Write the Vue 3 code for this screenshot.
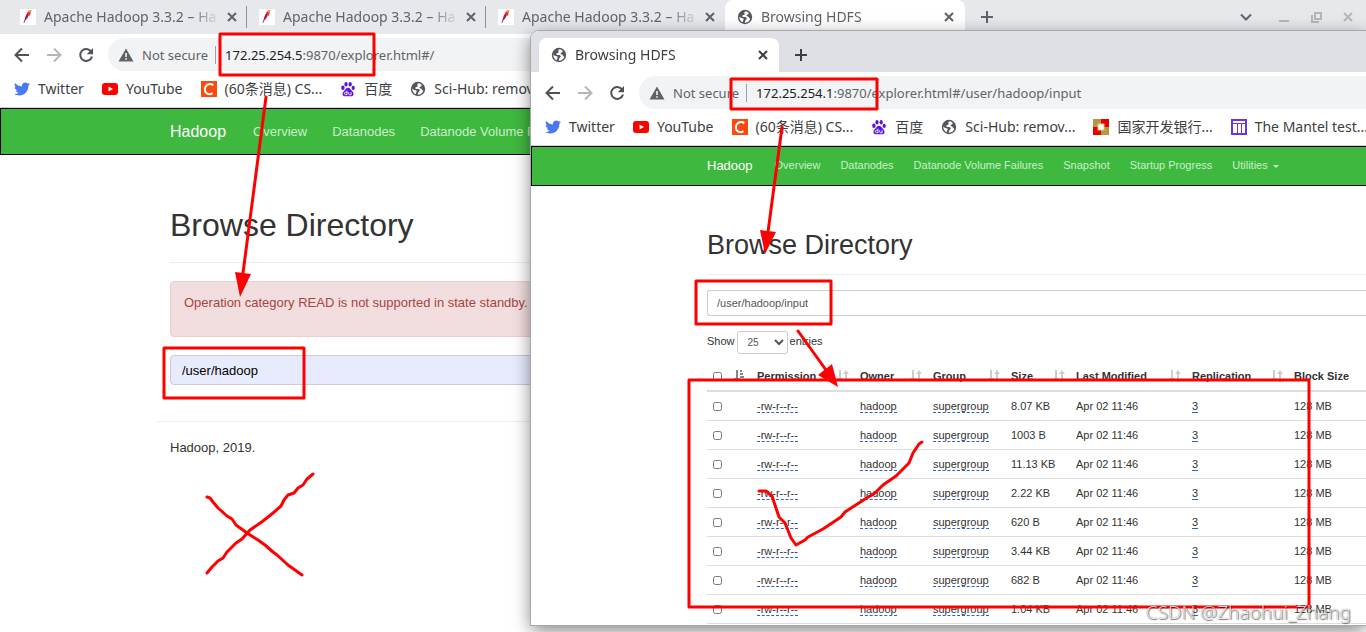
<template>
  <div class="desktop">
    <svg class="symbols" aria-hidden="true">
      <symbol id="feather" viewBox="0 0 16 16">
        <rect width="16" height="16" fill="#fff" />
        <path d="M4.2 13.6 4.8 10.4C5 8 6 5.500 7.600 3.400L9.300 4.500C8.600 7.500 7.200 9.700 5.400 11.200Z" fill="#b5124f" />
        <path d="M7 4.300C8 2.700 9.500 1.300 11.200 1.100 11.200 3 10.600 5 9.300 7.200Z" fill="#e2372b" />
        <path d="M8.700 2.500C9.500 1.600 10.400 1 11.300 1c0 1.100-.3 2.300-.8 3.400Z" fill="#f79a23" />
        <path d="M5 10.600 3.900 14" stroke="#6d3a8c" stroke-width=".8" />
      </symbol>
      <symbol id="globe" viewBox="0 0 16 16">
        <circle cx="8" cy="8" r="7.200" fill="#54585d" />
        <path d="M9.200 2.300c-1.800.2-2.100 1.200-1.700 2.200.4.900-.4 1.600-1.500 1.700-.9.100-1 .7-.6 1.300.5.600 1.800.3 2.900.4 1.300.1 1.500 1.200 1.300 2-.2.800-1.100.9-1.400 1.700-.2.700-.2 1.600-.6 2.100 2.700.1 5-1.500 5.700-4-.9-.1-1.200-.9-1.800-1.700-.5-.7-1.700-.5-1.900-1.200-.2-.8.9-1.100 1.600-1.500.5-.3.500-1.100.1-1.900Z" fill="#fff" />
        <path d="M2.300 7.500c.9.900 2.100 1.600 3.300 1.700 1.100.2 1.200.9.900 1.700-.3.700-.9 1-.7 2.400-2.200-.9-3.600-3.200-3.500-5.800Z" fill="#fff" />
      </symbol>
      <symbol id="twitter" viewBox="0 0 24 24">
        <path fill="#4a78f0" d="M23.953 4.570a10 10 0 01-2.825.775 4.958 4.958 0 002.163-2.723c-.951.555-2.005.959-3.127 1.184a4.920 4.920 0 00-8.384 4.482C7.690 8.095 4.067 6.130 1.640 3.162a4.822 4.822 0 00-.666 2.475c0 1.710.870 3.213 2.188 4.096a4.904 4.904 0 01-2.228-.616v.060a4.923 4.923 0 003.946 4.827 4.996 4.996 0 01-2.212.085 4.936 4.936 0 004.604 3.417 9.867 9.867 0 01-6.102 2.105c-.390 0-.779-.023-1.170-.067a13.995 13.995 0 007.557 2.209c9.053 0 13.998-7.496 13.998-13.985 0-.210 0-.420-.015-.630A9.935 9.935 0 0024 4.590z" />
      </symbol>
      <symbol id="youtube" viewBox="0 0 16 16">
        <rect y="2" width="16" height="12" rx="3" fill="#f00" />
        <path d="M6.500 5.500 11 8l-4.500 2.500Z" fill="#fff" />
      </symbol>
      <symbol id="csdn" viewBox="0 0 16 16">
        <rect width="16" height="16" fill="#fc4a0f" />
        <path d="M12.300 4.200C10.500 2.700 7.600 2.700 5.700 4.300 3.500 6.200 3.300 10 5.200 11.900c1.600 1.600 4.300 1.600 6.300.3" fill="none" stroke="#fff" stroke-width="2" />
      </symbol>
      <symbol id="baidu" viewBox="0 0 16 16">
        <g fill="#5a14dc">
          <ellipse cx="2.900" cy="6.700" rx="1.700" ry="2.200" />
          <ellipse cx="6" cy="3.200" rx="1.600" ry="2.200" />
          <ellipse cx="10.200" cy="3.200" rx="1.600" ry="2.200" />
          <ellipse cx="13.200" cy="6.900" rx="1.600" ry="2.100" />
          <path d="M8 6.800c1.700 0 2.500 1.800 4 3.200 1.500 1.300 1.800 2.500 1.300 3.900-.7 1.900-3 1.300-5.300 1.300s-4.500.6-5.300-1.200c-.6-1.500-.1-2.700 1.400-4C5.500 8.600 6.300 6.800 8 6.800Z" />
        </g>
        <path d="M7 9.700v4H5.600c-1.700 0-1.700-2.500 0-2.500H7M8.700 11.200v1.600c0 .7.300 1 .9 1h1.500v-2.600" fill="none" stroke="#fff" stroke-width=".9" />
      </symbol>
      <symbol id="bank" viewBox="0 0 16 16">
        <path d="M0 0h8v8H0ZM8 8h8v8H8Z" fill="#b8963c" />
        <path d="M8 0h8v8H8ZM0 8h8v8H0Z" fill="#e60000" />
        <rect x="5" y="5" width="6" height="6" fill="#fff" stroke="#d8c9a0" />
      </symbol>
      <symbol id="mantel" viewBox="0 0 16 16">
        <path d="M1 4.500h14M6.500 4.500V15M10.500 4.500V15" fill="none" stroke="#6633ee" />
        <path d="M1 1h14v14H1Z" fill="none" stroke="#6633ee" stroke-width="2" />
      </symbol>
      <symbol id="close" viewBox="0 0 16 16">
        <path d="m4 4 8 8M12 4l-8 8" fill="none" stroke="currentColor" stroke-width="2" />
      </symbol>
      <symbol id="plus" viewBox="0 0 16 16">
        <path d="M8 2v12M2 8h12" fill="none" stroke="currentColor" stroke-width="2" />
      </symbol>
      <symbol id="chevron" viewBox="0 0 16 16">
        <path d="m3 5.500 5 5 5-5" fill="none" stroke="currentColor" stroke-width="2" />
      </symbol>
      <symbol id="minimize" viewBox="0 0 16 16">
        <path d="M3 12h10" stroke="currentColor" stroke-width="2" />
      </symbol>
      <symbol id="restore" viewBox="0 0 16 16">
        <path d="M7 4h6v6H7ZM4 6v7h7" fill="none" stroke="currentColor" stroke-width="2" />
      </symbol>
      <symbol id="back" viewBox="0 0 16 16">
        <path d="M15 8H2M8 1.500 1.500 8 8 14.500" fill="none" stroke="currentColor" stroke-width="2" />
      </symbol>
      <symbol id="forward" viewBox="0 0 16 16">
        <path d="M1 8h13M8 1.500 14.500 8 8 14.500" fill="none" stroke="currentColor" stroke-width="2" />
      </symbol>
      <symbol id="reload" viewBox="0 0 16 16">
        <path d="M13.200 4.600A6 6 0 1 0 14 9.500" fill="none" stroke="currentColor" stroke-width="2" />
        <path d="M15 1v6.300H8.700Z" fill="currentColor" />
      </symbol>
      <symbol id="warning" viewBox="0 0 16 16">
        <path d="M8 1.500 15.500 14.500H.5Z" fill="currentColor" />
        <path d="M8 6v4M8 11.200v1.600" stroke="#fff" stroke-width="1.500" />
      </symbol>
      <symbol id="sort" viewBox="0 0 12 12">
        <path d="M3 0v10M9 12V2" fill="none" stroke="currentColor" stroke-width="2" />
        <path d="M0 8h6l-3 4ZM6 4h6L9 0Z" fill="currentColor" />
      </symbol>
      <symbol id="sort-asc" viewBox="0 0 12 12">
        <path d="M3 0v10" stroke="currentColor" stroke-width="2" />
        <path d="M0 8h6l-3 4Z" fill="currentColor" />
        <path d="M6 1h2M6 4h3M6 7h4M6 10h6" stroke="currentColor" stroke-width="2" />
      </symbol>
    </svg>

    <section v-for="win in windows" :key="win.id" :class="['window', win.id]">
      <div class="tab-strip">
        <div v-for="(tab, index) in win.tabs" :key="index" :class="['tab', { active: tab.active }]">
          <svg class="icon"><use :href="'#' + tab.icon" /></svg>
          <span class="tab-title">{{ tab.title }}</span>
          <button class="icon-button" aria-label="Close tab"><svg class="icon"><use href="#close" /></svg></button>
        </div>
        <button class="icon-button new-tab" aria-label="New tab"><svg class="icon"><use href="#plus" /></svg></button>
        <div v-if="win.controls" class="controls">
          <button v-for="name in win.controls" :key="name" :class="['icon-button', name]" :aria-label="name">
            <svg class="icon"><use :href="'#' + name" /></svg>
          </button>
        </div>
      </div>

      <div class="toolbar">
        <button class="icon-button" aria-label="Back"><svg class="icon"><use href="#back" /></svg></button>
        <button class="icon-button" aria-label="Forward" disabled><svg class="icon"><use href="#forward" /></svg></button>
        <button class="icon-button" aria-label="Reload"><svg class="icon"><use href="#reload" /></svg></button>
        <div class="address">
          <svg class="icon"><use href="#warning" /></svg>
          <span class="security">Not secure</span>
          <span class="url"><b>{{ win.host }}</b>{{ win.path }}</span>
        </div>
      </div>

      <nav class="bookmarks">
        <a v-for="mark in bookmarks" :key="mark.title" href="#" class="bookmark">
          <svg class="icon"><use :href="'#' + mark.icon" /></svg>
          <span>{{ mark.title }}</span>
        </a>
      </nav>

      <nav class="navbar">
        <a href="#" class="brand">Hadoop</a>
        <a v-for="item in navItems" :key="item" href="#" class="nav-link">{{ item }}</a>
        <a href="#" class="nav-link">Utilities <span class="caret"></span></a>
      </nav>

      <main v-if="win.id === 'standby'" class="page">
        <h1>Browse Directory</h1>
        <div class="alert">Operation category READ is not supported in state standby. Visit https://s.apache.org/sbnn-error</div>
        <input v-model="standbyPath" class="directory" type="text" aria-label="Directory" />
        <footer>Hadoop, 2019.</footer>
      </main>

      <main v-else class="page">
        <h1>Browse Directory</h1>
        <input v-model="activePath" class="directory" type="text" aria-label="Directory" />
        <label class="entries">
          Show
          <select v-model="pageSize">
            <option>25</option>
            <option>50</option>
            <option>100</option>
          </select>
          entries
        </label>
        <table>
          <thead>
            <tr>
              <th class="col-check">
                <div class="head">
                  <input type="checkbox" aria-label="Select all" />
                  <svg class="sort sorted"><use href="#sort-asc" /></svg>
                </div>
              </th>
              <th v-for="col in columns" :key="col.name" :class="col.key">
                <div class="head">
                  <span>{{ col.name }}</span>
                  <svg class="sort"><use href="#sort" /></svg>
                </div>
              </th>
              <th>Block Size</th>
            </tr>
          </thead>
          <tbody>
            <tr v-for="size in sizes" :key="size">
              <td><input type="checkbox" :aria-label="'Select ' + size" /></td>
              <td><a href="#">-rw-r--r--</a></td>
              <td><a href="#">hadoop</a></td>
              <td><a href="#">supergroup</a></td>
              <td>{{ size }}</td>
              <td>Apr 02 11:46</td>
              <td><a href="#">3</a></td>
              <td>128 MB</td>
            </tr>
          </tbody>
        </table>
      </main>
    </section>

    <!-- Red pen marks over both windows -->
    <svg class="marks" aria-hidden="true">
      <g fill="none" stroke="#f00" stroke-width="3" stroke-linejoin="round" stroke-linecap="round">
        <rect x="220" y="34" width="154" height="41" />
        <rect x="731" y="79" width="146" height="30" />
        <rect x="164" y="348" width="140" height="50" />
        <rect x="696" y="281" width="135" height="43" />
        <rect x="689" y="380" width="620" height="227" />
        <path d="M266 97 243 273M782 127 768 232M798 331 826 370" />
        <path d="M207 497 210 498 213 502 218 508 227 516 232 519 236 525 247 533 258 540 265 545 273 552 277 555 288 565 302 575" />
        <path d="M313 474 307 479 303 485 298 488 294 493 288 495 284 500 281 506 273 513 263 521 250 530 242 539 236 543 227 552 223 558 218 561 212 567 207 573" />
        <path d="M759 491 766 491 772 496 779 517 785 523 791 538 796 545 805 540 808 537 823 529 841 517 845 512 865 499 875 493 883 485 896 476 909 463 913 453 919 444 922 442" />
      </g>
      <path d="M235 272 251 274 240 297ZM760 230 776 232 765 254ZM818 375 832 364 838 387Z" fill="#f00" />
    </svg>
    <div class="watermark">CSDN @Zhaohui_Zhang</div>
  </div>
</template>

<script setup>
import { ref } from "vue";

const hadoopTab = { icon: "feather", title: "Apache Hadoop 3.3.2 – Ha" };
const browsingTab = { icon: "globe", title: "Browsing HDFS", active: true };

const windows = [
  {
    id: "standby",
    tabs: [hadoopTab, hadoopTab, hadoopTab, browsingTab],
    controls: ["chevron", "minimize", "restore", "close"],
    host: "172.25.254.5",
    path: ":9870/explorer.html#/",
  },
  {
    id: "active-node",
    tabs: [browsingTab],
    host: "172.25.254.1",
    path: ":9870/explorer.html#/user/hadoop/input",
  },
];

const bookmarks = [
  { icon: "twitter", title: "Twitter" },
  { icon: "youtube", title: "YouTube" },
  { icon: "csdn", title: "(60条消息) CS..." },
  { icon: "baidu", title: "百度" },
  { icon: "globe", title: "Sci-Hub: remov..." },
  { icon: "bank", title: "国家开发银行..." },
  { icon: "mantel", title: "The Mantel test..." },
];

const navItems = ["Overview", "Datanodes", "Datanode Volume Failures", "Snapshot", "Startup Progress"];

const columns = [
  { key: "col-permission", name: "Permission" },
  { key: "col-owner", name: "Owner" },
  { key: "col-group", name: "Group" },
  { key: "col-size", name: "Size" },
  { key: "col-modified", name: "Last Modified" },
  { key: "col-replication", name: "Replication" },
];

const sizes = ["8.07 KB", "1003 B", "11.13 KB", "2.22 KB", "620 B", "3.44 KB", "682 B", "1.04 KB"];

const standbyPath = ref("/user/hadoop");
const activePath = ref("/user/hadoop/input");
const pageSize = ref("25");
</script>

<style>
body {
  margin: 0;
  overflow: hidden;
}
</style>

<style scoped>
.desktop {
  position: relative;
  min-height: 100vh;
  overflow: hidden;
  background: #fff;
  color: #333;
  font-family: "Liberation Sans", Arial, sans-serif;
}

.desktop * {
  box-sizing: border-box;
}

.symbols {
  display: none;
}

.icon {
  display: block;
  flex: none;
  width: 16px;
  height: 16px;
}

.icon-button {
  flex: none;
  padding: 0;
  border: none;
  background: none;
  color: inherit;
}

/* Windows */
.window {
  background: #fff;
  overflow: hidden;
}

.active-node {
  position: absolute;
  top: 31px;
  right: 0;
  bottom: 7px;
  left: 531px;
  border-top-left-radius: 8px;
  box-shadow: 0 0 0 1px #a8a9ab, 0 5px 18px rgba(0, 0, 0, 0.5);
}

.tab-strip,
.toolbar,
.bookmarks {
  display: flex;
  align-items: center;
  font-family: "Noto Sans", "Noto Sans CJK SC", sans-serif;
  font-size: 14px;
  line-height: 18px;
  white-space: nowrap;
}

.tab-strip {
  padding-left: 8px;
  background: #e7e8ec;
  color: #5f6368;
}

.active-node .tab-strip {
  padding-top: 7px;
  background: #dee0e5;
  color: #3c4043;
}

.tab {
  display: flex;
  align-items: center;
  gap: 8px;
  width: 239px;
  height: 34px;
  padding: 0 6px 0 12px;
  border-right: 1px solid #8f9196;
  border-image: linear-gradient(transparent 7px, #8f9196 7px, #8f9196 27px, transparent 27px) 1;
}

.tab:nth-child(3) {
  border-color: transparent;
  border-image: none;
}

.tab.active {
  width: 240px;
  padding-right: 8px;
  border: none;
  border-radius: 8px 8px 0 0;
  background: #fff;
}

.tab-title {
  flex: 1;
  overflow: hidden;
  mask-image: linear-gradient(to right, #000 145px, transparent 177px);
}

.new-tab {
  margin-left: 14px;
}

.controls {
  display: flex;
  gap: 16px;
  margin-left: auto;
  padding-right: 10px;
  color: #b4b6ba;
}

.controls .chevron {
  margin-right: 6px;
  color: #5f6368;
}

.toolbar {
  height: 41px;
  gap: 16px;
  padding-left: 14px;
  color: #4f5357;
}

.toolbar .icon-button:disabled {
  color: #b4b6ba;
}

.address {
  display: flex;
  flex: 1;
  align-items: center;
  height: 33px;
  margin-left: -2px;
  padding-left: 10px;
  border-radius: 16px 0 0 16px;
  background: #f1f3f4;
  color: #5f6368;
  font-size: 13px;
}

.security {
  margin-left: 8px;
  padding-right: 7px;
  border-right: 1px solid #9aa0a6;
}

.url {
  margin-left: 9px;
}

.url b {
  color: #202124;
  font-weight: normal;
}

.bookmarks {
  height: 33px;
  gap: 18px;
  padding: 0 0 4px 14px;
  border-bottom: 1px solid #d0d2d5;
}

.bookmark {
  display: flex;
  align-items: center;
  gap: 8px;
  color: #3c4043;
  text-decoration: none;
}

/* Hadoop page */
.navbar {
  display: flex;
  align-items: center;
  height: 47px;
  gap: 25px;
  padding-left: 169px;
  border: 1px solid #000;
  border-right: none;
  background: #3fb83f;
  font-size: 13px;
  white-space: nowrap;
}

.active-node .navbar {
  height: 40px;
  gap: 20px;
  padding: 0 0 2px 175px;
  font-size: 11px;
}

.brand {
  margin-right: 2px;
  color: #fff;
  font-size: 16px;
  text-decoration: none;
}

.active-node .brand {
  font-size: 13px;
}

.nav-link {
  color: #c8f0c8;
  text-decoration: none;
}

.caret {
  display: inline-block;
  margin-left: 2px;
  border: 3px solid transparent;
  border-top-color: #c8f0c8;
  border-bottom: none;
  vertical-align: middle;
}

.page {
  padding: 50px 170px 0;
  font-size: 13px;
}

.active-node .page {
  padding: 43px 0 0 176px;
  font-size: 11px;
}

h1 {
  margin: 0 0 18px;
  padding-bottom: 17px;
  border-bottom: 1px solid #eee;
  font-size: 32px;
  font-weight: normal;
  line-height: 40px;
}

.active-node h1 {
  margin-bottom: 15px;
  padding-bottom: 12px;
  font-size: 27px;
  line-height: 33px;
}

.alert {
  height: 56px;
  padding: 12px 13px;
  border: 1px solid #ebccd1;
  border-radius: 4px;
  background: #f2dede;
  color: #a94442;
  line-height: 18px;
}

.directory {
  display: block;
  width: 100%;
  height: 30px;
  margin-top: 18px;
  padding: 0 11px;
  border: 1px solid #ccc;
  border-radius: 4px;
  background: #e8ebfe;
  color: #000;
  font: 13px "Liberation Sans", Arial, sans-serif;
}

.active-node .directory {
  height: 26px;
  margin: 0;
  padding: 0 9px;
  border-right: none;
  border-radius: 3px 0 0 3px;
  background: #fff;
  color: #555;
  font-size: 11px;
}

footer {
  margin: 36px -13px 0;
  padding: 17px 13px;
  border-top: 1px solid #eee;
  line-height: 18px;
}

.entries {
  display: flex;
  gap: 2px;
  margin-top: 15px;
  line-height: 21px;
}

.entries select {
  width: 51px;
  height: 23px;
  padding: 0 0 0 6px;
  border: 1px solid #ccc;
  border-radius: 3px;
  background: #fff;
  color: #555;
  font: 10px "Liberation Sans", Arial, sans-serif;
}

table {
  width: 100%;
  margin-top: 8px;
  border-collapse: separate;
  border-spacing: 0;
  table-layout: fixed;
  white-space: nowrap;
}

th,
td {
  height: 29px;
  padding: 0 5px 0 6px;
  text-align: left;
}

th {
  height: 30px;
  border-bottom: 2px solid #ddd;
}

td {
  border-bottom: 1px solid #ddd;
}

.head {
  display: flex;
  align-items: center;
  justify-content: space-between;
}

.sort {
  width: 12px;
  height: 12px;
  color: #ccc;
}

.sort.sorted {
  color: #888;
}

.col-check {
  width: 44px;
}

.col-permission {
  width: 103px;
}

.col-owner {
  width: 73px;
}

.col-group {
  width: 78px;
}

.col-size {
  width: 65px;
}

.col-modified {
  width: 116px;
}

.col-replication {
  width: 102px;
}

table input {
  display: block;
  width: 9px;
  height: 9px;
  margin: 0;
}

td a {
  border-bottom: 1px dashed #2a62d0;
  color: #333;
  text-decoration: none;
}

/* Overlays */
.marks {
  position: absolute;
  top: 0;
  left: 0;
  width: 100%;
  height: 100%;
  pointer-events: none;
}

.watermark {
  position: absolute;
  right: 15px;
  bottom: 6px;
  color: rgba(255, 255, 255, 0.8);
  font: 300 19px "Noto Sans", sans-serif;
  line-height: 28px;
  text-shadow: 1px 1px 1px rgba(0, 0, 0, 0.5), 0 0 1px rgba(0, 0, 0, 0.5);
}
</style>
